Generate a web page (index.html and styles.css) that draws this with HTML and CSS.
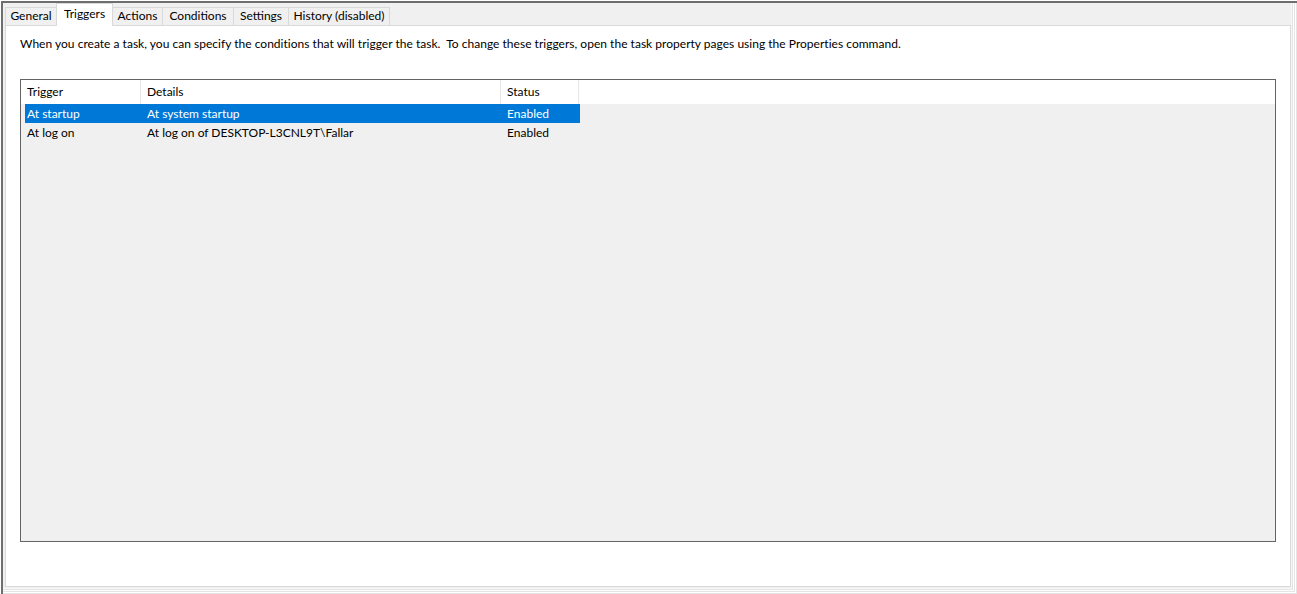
FILE: index.html
```html
<!DOCTYPE html>
<html>
<head>
<meta charset="utf-8">
<title>Triggers</title>
<link rel="stylesheet" href="styles.css">
</head>
<body>
<div class="screen">
  <div class="frame">
    <div class="tabstrip">
      <div class="tab w-general">General</div>
      <div class="tab tab-active w-triggers">Triggers</div>
      <div class="tab w-actions">Actions</div>
      <div class="tab w-conditions">Conditions</div>
      <div class="tab w-settings">Settings</div>
      <div class="tab w-history">History (disabled)</div>
    </div>
    <div class="panel">
      <p class="desc">When you create a task, you can specify the conditions that will trigger the task.&nbsp; To change these triggers, open the task property pages using the Properties command.</p>
      <div class="listview">
        <div class="lv-header">
          <div class="hcell">Trigger</div>
          <div class="hcell">Details</div>
          <div class="hcell">Status</div>
          <div class="hfill"></div>
        </div>
        <div class="lv-body">
          <div class="row row-selected">
            <div class="cell cell-first">At startup</div>
            <div class="cell">At system startup</div>
            <div class="cell">Enabled</div>
          </div>
          <div class="row">
            <div class="cell cell-first">At log on</div>
            <div class="cell">At log on of DESKTOP-L3CNL9T\Fallar</div>
            <div class="cell">Enabled</div>
          </div>
        </div>
      </div>
    </div>
  </div>
</div>
</body>
</html>
```

FILE: styles.css
```css
html, body {
  margin: 0;
  padding: 0;
  background: #ffffff;
}

body {
  font-family: "Lato", "Liberation Sans", sans-serif;
  font-size: 12px;
  color: #000000;
}

.screen {
  width: 1297px;
  height: 594px;
  box-sizing: border-box;
  padding: 1px 0 0 1px;
  background: #ffffff;
  overflow: hidden;
}

.frame {
  width: 1296px;
  height: 593px;
  box-sizing: border-box;
  border-top: 2px solid #6e6e6e;
  border-left: 2px solid #6e6e6e;
  background: #f0f0f0;
  padding: 0 6px 7px 2px;
  display: flex;
  flex-direction: column;
  box-shadow:
    inset -1px -1px 0 #e4e4e4,
    inset -2px -2px 0 #ffffff,
    inset -3px -3px 0 #e4e4e4,
    inset -4px -4px 0 #ffffff,
    inset -5px -5px 0 #e4e4e4,
    inset -6px -6px 0 #f7f7f7;
}

.tabstrip {
  height: 22px;
  display: flex;
  align-items: flex-end;
  flex: none;
}

.tab {
  height: 18px;
  box-sizing: border-box;
  border: 1px solid #d9d9d9;
  border-bottom: none;
  background: #f0f0f0;
  margin-left: -1px;
  display: flex;
  align-items: center;
  justify-content: center;
  line-height: 16px;
  padding-bottom: 2px;
  white-space: nowrap;
}

.tab:first-child {
  margin-left: 0;
}

.tab-active {
  height: 23px;
  margin-bottom: -1px;
  background: #ffffff;
  position: relative;
  z-index: 1;
  align-items: flex-start;
  padding-top: 2px;
  padding-bottom: 0;
}

.w-general { width: 52px; }
.w-triggers { width: 57px; }
.w-actions { width: 51px; }
.w-conditions { width: 72px; }
.w-settings { width: 56px; }
.w-history { width: 102px; }

.panel {
  height: 562px;
  box-sizing: border-box;
  border: 1px solid #d9d9d9;
  background: #ffffff;
  padding: 10px 14px 0 14px;
  flex: none;
}

.desc {
  margin: 0 0 27px 0;
  line-height: 16px;
  letter-spacing: 0.02px;
  white-space: nowrap;
}

.listview {
  height: 463px;
  box-sizing: border-box;
  border: 1px solid #646464;
  background: #f0f0f0;
  display: flex;
  flex-direction: column;
}

.lv-header {
  height: 24px;
  background: #ffffff;
  display: flex;
  flex: none;
}

.hcell {
  box-sizing: border-box;
  border-right: 1px solid #e5e5e5;
  padding-left: 6px;
  line-height: 23px;
  flex: none;
}

.hcell:nth-child(1) { width: 120px; }
.hcell:nth-child(2) { width: 360px; }
.hcell:nth-child(3) { width: 78px; }

.hfill {
  flex: 1;
}

.lv-body {
  flex: 1;
  padding-left: 4px;
}

.row {
  display: flex;
  height: 19px;
  width: 555px;
  line-height: 19px;
}

.row-selected {
  background: #0078d7;
  color: #ffffff;
}

.cell {
  box-sizing: border-box;
  padding-left: 6px;
  white-space: nowrap;
}

.cell:nth-child(1) { width: 116px; padding-left: 2px; }
.cell:nth-child(2) { width: 360px; }
.cell:nth-child(3) { width: 79px; }
```
